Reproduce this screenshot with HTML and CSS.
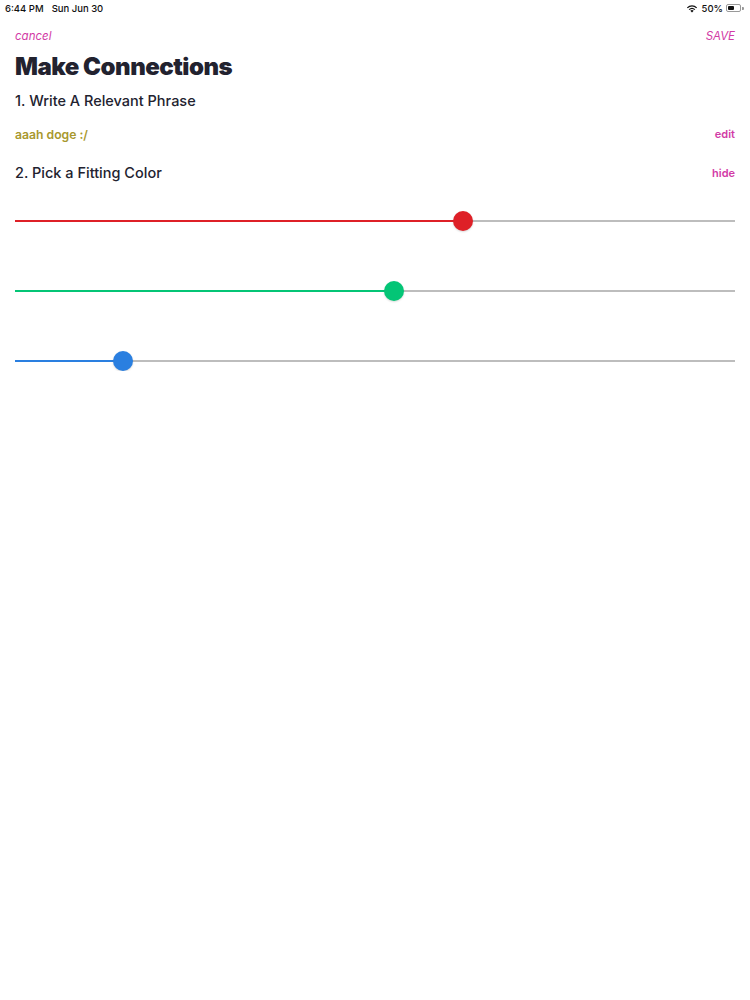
FILE: index.html
```html
<!DOCTYPE html>
<html>
<head>
<meta charset="utf-8">
<link rel="stylesheet" href="styles.css">
</head>
<body>
<div class="status">
  <div class="status-left"><span>6:44 PM</span><span>Sun Jun 30</span></div>
  <div class="status-right">
    <svg class="wifi" width="12" height="9" viewBox="0 0 12 9"><path d="M6 8.6 L4.3 6.8 A2.5 2.5 0 0 1 7.7 6.8 Z" fill="#111"/><path d="M2.7 5.2 A4.8 4.8 0 0 1 9.3 5.2 L8.4 6.1 A3.5 3.5 0 0 0 3.6 6.1 Z" fill="#111"/><path d="M0.9 3.4 A7.3 7.3 0 0 1 11.1 3.4 L10.2 4.3 A6 6 0 0 0 1.8 4.3 Z" fill="#111"/></svg>
    <span>50%</span>
    <span class="battery"><span class="battery-fill"></span></span><span class="battery-tip"></span>
  </div>
</div>
<div class="page">
  <div class="topbar"><span class="link italic">cancel</span><span class="link italic">SAVE</span></div>
  <h1 class="title">Make Connections</h1>
  <div class="row step1-row"><h2 class="step">1. Write A Relevant Phrase</h2></div>
  <div class="row phrase-row"><span class="phrase">aaah doge :/</span><span class="action">edit</span></div>
  <div class="row color-row"><h2 class="step">2. Pick a Fitting Color</h2><span class="action">hide</span></div>
  <div class="sliders">
    <div class="slider"><div class="fill red" style="width:62.2%"></div><div class="thumb red" style="left:62.2%"></div></div>
    <div class="slider"><div class="fill green" style="width:52.6%"></div><div class="thumb green" style="left:52.6%"></div></div>
    <div class="slider"><div class="fill blue" style="width:15%"></div><div class="thumb blue" style="left:15%"></div></div>
  </div>
</div>
</body>
</html>
```
FILE: styles.css
```css
* { box-sizing: border-box; margin: 0; padding: 0; }
body { margin: 0; background: #fff; font-family: Inter, "Liberation Sans", sans-serif; color: #1f1f2b; width: 750px; }
.status { height: 14px; display: flex; justify-content: space-between; align-items: center; padding: 0 6px 0 5px; font-size: 9.5px; font-weight: 500; color: #111; margin-top: 1px; }
.status-left { display: flex; gap: 8px; }
.status-right { display: flex; align-items: center; gap: 3px; }
.wifi { margin-right: 1px; }
.battery { width: 15px; height: 8px; border: 1px solid #999; border-radius: 2px; padding: 1px; display: inline-flex; }
.battery-fill { width: 6px; height: 100%; background: #111; border-radius: 1px; }
.battery-tip { width: 2px; height: 3px; background: #999; margin-left: -2px; border-radius: 0 1px 1px 0; }
.page { padding: 0 15px; }
.topbar { display: flex; justify-content: space-between; margin-top: 13px; height: 16px; align-items: center; }
.link { color: #d23ba6; font-size: 11.5px; }
.italic { font-style: italic; }
.title { font-size: 24px; font-weight: 900; letter-spacing: -0.5px; color: #22222f; margin-top: 6px; line-height: 34px; }
.row { display: flex; justify-content: space-between; align-items: center; height: 20px; }
.step { font-size: 14.5px; font-weight: 500; color: #22222f; line-height: 20px; }
.step1-row { margin-top: 7px; }
.phrase-row { margin-top: 13px; }
.phrase { font-size: 12.2px; font-weight: 600; color: #a8982e; }
.action { font-size: 11px; font-weight: 600; color: #d23ba6; }
.color-row { margin-top: 19px; }
.sliders { margin-top: 28px; display: flex; flex-direction: column; gap: 50px; }
.slider { position: relative; height: 20px; }
.slider::before { content: ""; position: absolute; left: 0; right: 0; top: 9px; height: 1.5px; background: #bdbdbd; }
.fill { position: absolute; left: 0; top: 9px; height: 1.5px; }
.thumb { position: absolute; top: 0; width: 20px; height: 20px; border-radius: 50%; margin-left: -10px; box-shadow: 0 1px 2px rgba(0,0,0,0.15); }
.red { background: #de2027; }
.green { background: #04c576; }
.blue { background: #2a7fe0; }
```
